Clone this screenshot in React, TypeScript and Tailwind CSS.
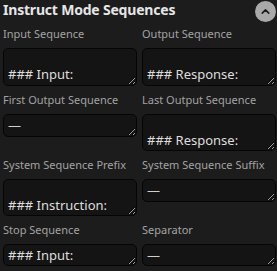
import { ChevronUp } from "lucide-react";

const fields = [
  { label: "Input Sequence", value: "\n### Input:", h: "h-[38px]" },
  { label: "Output Sequence", value: "\n### Response:", h: "h-[38px]" },
  { label: "First Output Sequence", value: "", h: "h-[23px]" },
  { label: "Last Output Sequence", value: "\n### Response:", h: "h-[37px]" },
  { label: "System Sequence Prefix", value: "\n### Instruction:", h: "h-[37px]" },
  { label: "System Sequence Suffix", value: "", h: "h-[23px]" },
  { label: "Stop Sequence", value: "### Input:", h: "h-[22px]" },
  { label: "Separator", value: "", h: "h-[22px]" },
];

export default function App() {
  return (
    <div className="w-[277px] h-[271px] overflow-hidden bg-[#1c1c1c] pl-[3px] pr-[1px] font-['Noto_Sans',sans-serif] [color-scheme:dark]">
      {/* Header */}
      <div className="h-[26px] flex items-start justify-between">
        <h3 className="text-[14px] leading-[20px] font-bold tracking-[-0.2px] text-[#e6e6e6]">
          Instruct Mode Sequences
        </h3>
        <button className="mt-[1px] w-[21px] h-[21px] rounded-full bg-[#a9a9a9] flex items-center justify-center">
          <ChevronUp className="w-[13px] h-[13px] text-[#1c1c1c]" strokeWidth={3} />
        </button>
      </div>

      {/* Fields */}
      <div className="grid grid-cols-2 gap-x-[5px] gap-y-[6px] items-start">
        {fields.map((f) => (
          <div key={f.label} className="flex flex-col">
            <label className="h-[16px] leading-[16px] text-[11px] text-[#a3a3a3] whitespace-nowrap">
              {f.label}
            </label>
            <textarea
              readOnly
              defaultValue={f.value}
              placeholder="—"
              className={`mt-[6px] ${f.h} w-full rounded-[5px] border border-[#050505] bg-[#141414] px-[4px] py-[3px] text-[13px] leading-[15px] text-[#dedede] placeholder:text-[#cfcfcf] overflow-hidden outline-none`}
            />
          </div>
        ))}
      </div>
    </div>
  );
}
